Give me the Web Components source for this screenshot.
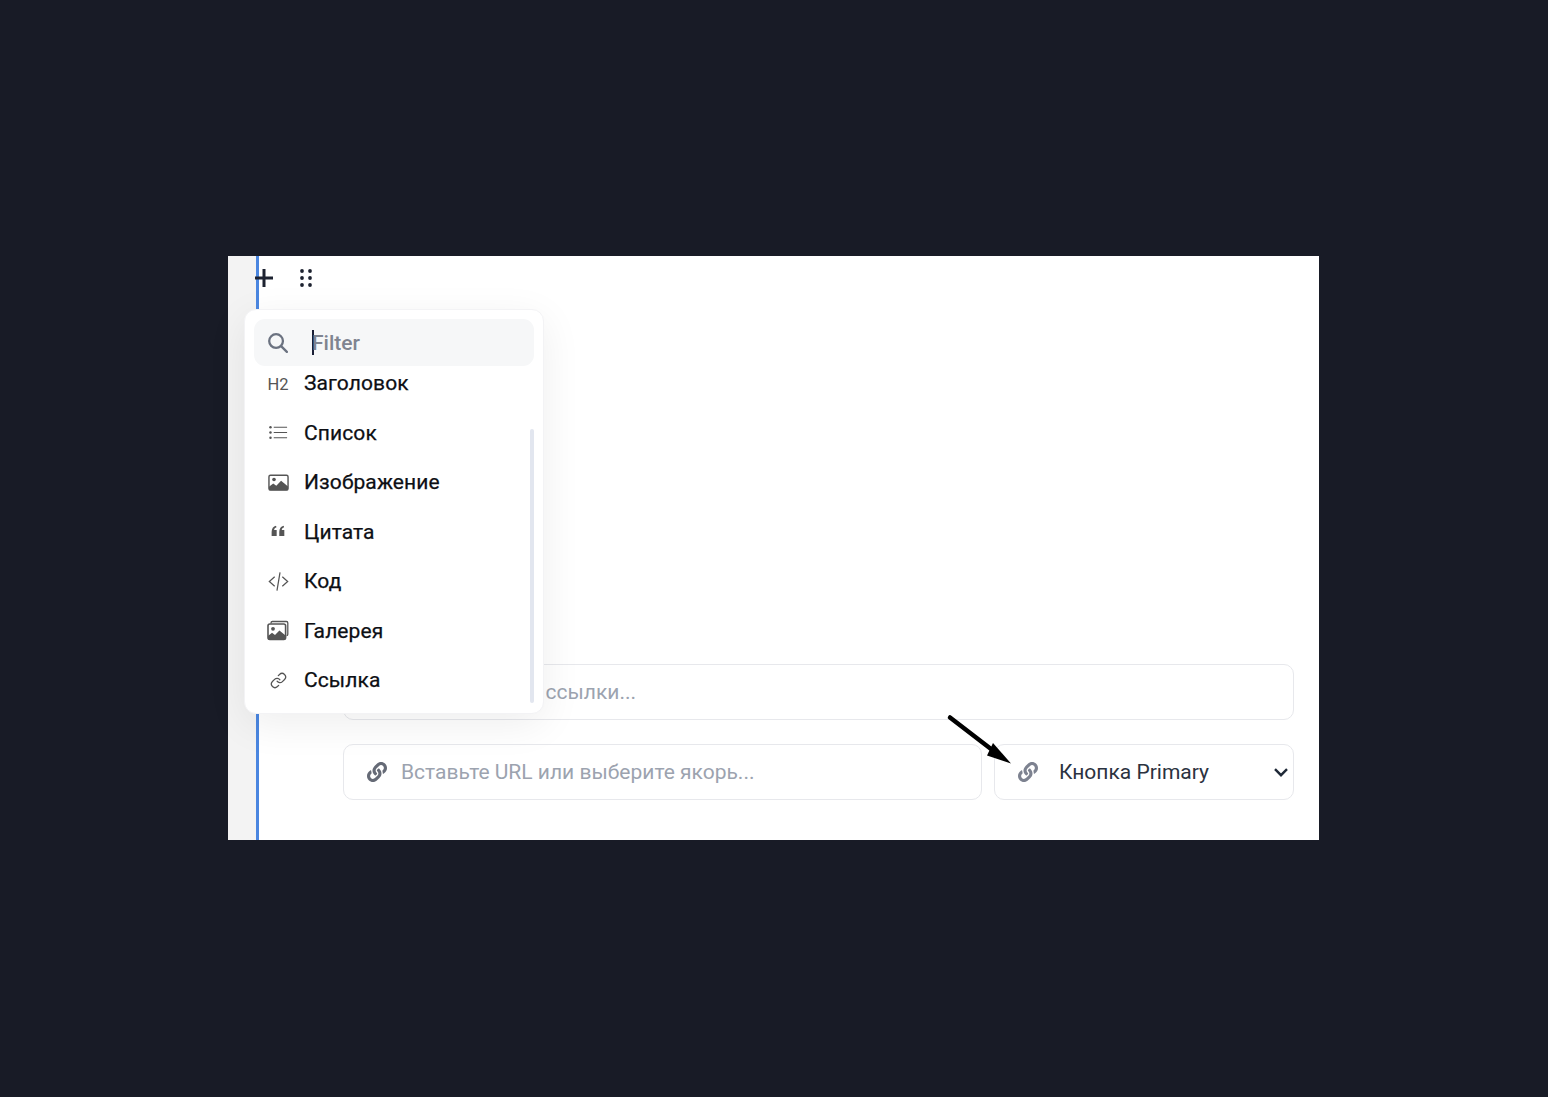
<!DOCTYPE html>
<html lang="ru">
<head>
<meta charset="utf-8">
<title>Editor</title>
<style>
  html, body { margin: 0; height: 100%; }
  body {
    background: #181b26;
    font-family: Roboto, "Liberation Sans", sans-serif;
    display: flex;
    align-items: center;
    justify-content: center;
    box-sizing: border-box;
    height: 1097px;
    padding: 0 1px 1px 0;
    overflow: hidden;
  }
</style>
</head>
<body>
<editor-frame>
  <block-toolbar slot="overlay"></block-toolbar>
  <slash-menu slot="overlay">
    <menu-item label="Заголовок" icon="h2"></menu-item>
    <menu-item label="Список" icon="list"></menu-item>
    <menu-item label="Изображение" icon="image"></menu-item>
    <menu-item label="Цитата" icon="quote"></menu-item>
    <menu-item label="Код" icon="code"></menu-item>
    <menu-item label="Галерея" icon="gallery"></menu-item>
    <menu-item label="Ссылка" icon="link"></menu-item>
  </slash-menu>
  <callout-arrow slot="overlay"></callout-arrow>

  <text-field placeholder="Введите текст ссылки..." inset="57"></text-field>
  <field-row>
    <text-field placeholder="Вставьте URL или выберите якорь..." icon></text-field>
    <style-select value="Кнопка Primary"></style-select>
  </field-row>
</editor-frame>

<script>
const LINK_PATH = 'M326.612 185.391c59.747 59.809 58.927 155.698.36 214.59-.11.12-.24.25-.36.37l-67.2 67.2c-59.27 59.27-155.699 59.262-214.96 0-59.27-59.26-59.27-155.7 0-214.96l37.106-37.106c9.84-9.84 26.786-3.3 27.294 10.606.648 17.722 3.826 35.527 9.69 52.721 1.986 5.822.567 12.262-3.783 16.612l-13.087 13.087c-28.026 28.026-28.905 73.66-1.155 101.96 28.024 28.579 74.086 28.749 102.325.51l67.2-67.19c28.191-28.191 28.073-73.757 0-101.83-3.701-3.694-7.429-6.564-10.341-8.569a16.037 16.037 0 0 1-6.947-12.606c-.396-10.567 3.348-21.456 11.698-29.806l21.054-21.055c5.521-5.521 14.182-6.199 20.584-1.731a152.482 152.482 0 0 1 20.522 17.197zM467.547 44.449c-59.261-59.262-155.69-59.27-214.96 0l-67.2 67.2c-.12.12-.25.25-.36.37-58.566 58.892-59.387 154.781.36 214.59a152.454 152.454 0 0 0 20.521 17.196c6.402 4.468 15.064 3.789 20.584-1.731l21.054-21.055c8.35-8.35 12.094-19.239 11.698-29.806a16.037 16.037 0 0 0-6.947-12.606c-2.912-2.005-6.64-4.875-10.341-8.569-28.073-28.073-28.191-73.639 0-101.83l67.2-67.19c28.239-28.239 74.3-28.069 102.325.51 27.75 28.3 26.872 73.934-1.155 101.96l-13.087 13.087c-4.35 4.35-5.769 10.79-3.783 16.612 5.864 17.194 9.042 34.999 9.69 52.721.509 13.906 17.454 20.446 27.294 10.606l37.106-37.106c59.271-59.259 59.271-155.699.001-214.959z';

const linkSolid = `<svg width="20" height="20" viewBox="0 0 512 512" fill="currentColor"><path d="${LINK_PATH}"/></svg>`;

const MENU_ICONS = {
  h2: '<span class="h2">H2</span>',
  list: `<svg width="21" height="21" viewBox="0 0 22 22" fill="none" stroke="#555" stroke-width="1.200">
      <path d="M6 5.500h14M6 11h14M6 16.500h14"/>
      <g fill="#555" stroke="none"><circle cx="2.600" cy="5.500" r="1.300"/><circle cx="2.600" cy="11" r="1.300"/><circle cx="2.600" cy="16.500" r="1.300"/></g>
    </svg>`,
  image: `<svg width="21" height="21" viewBox="0 0 22 22">
      <rect x="1" y="3.400" width="20" height="15.600" rx="1.600" fill="none" stroke="#555" stroke-width="1.500"/>
      <circle cx="6.300" cy="7.800" r="1.900" fill="#555"/>
      <path d="M1 19v-3.500l4.500-3.400 3.200 2.300 5-5.200 7.300 6V19z" fill="#555"/>
    </svg>`,
  quote: `<svg width="21" height="21" viewBox="0 0 22 22" fill="#555">
      <path d="M3.800 11.400c0-3.400 1.700-5.600 4.600-6.400l.5 1.500c-1.500.5-2.300 1.500-2.500 2.800h2.700v6.300H3.800zM11.800 11.400c0-3.400 1.700-5.600 4.600-6.400l.5 1.500c-1.500.5-2.300 1.500-2.500 2.800h2.700v6.300h-5.300z"/>
    </svg>`,
  code: `<svg width="21" height="21" viewBox="0 0 22 22" fill="none" stroke="#555" stroke-width="1.300">
      <path d="M7 6l-5.600 5L7 16M15 6l5.600 5L15 16M12.600 1.400L9.400 20.600"/>
    </svg>`,
  gallery: `<svg width="22" height="22" viewBox="0 0 22 22">
      <path d="M4 3.600V2.900c0-.8.6-1.400 1.400-1.400h14c.8 0 1.400.6 1.400 1.400v11.400c0 .8-.5 1.400-1.200 1.400" fill="none" stroke="#555" stroke-width="1.300"/>
      <rect x="1" y="4" width="17.600" height="15.400" rx="1.800" fill="none" stroke="#555" stroke-width="1.600"/>
      <circle cx="6" cy="8.800" r="1.900" fill="#555"/>
      <path d="M1 19.400v-3.400l4-3.200 3 2.100 4.400-4.500 6.200 5v4z" fill="#555"/>
    </svg>`,
  link: `<svg width="17" height="17" viewBox="0 0 24 24" fill="none" stroke="#555" stroke-width="1.800" stroke-linecap="round">
      <path d="M10 13a5 5 0 0 0 7.540.54l3-3a5 5 0 0 0-7.070-7.070l-1.720 1.710"/>
      <path d="M14 11a5 5 0 0 0-7.540-.54l-3 3a5 5 0 0 0 7.070 7.070l1.710-1.710"/>
    </svg>`
};

class EditorFrame extends HTMLElement {
  constructor() {
    super();
    this.attachShadow({ mode: 'open' });
    this.shadowRoot.innerHTML = `
      <style>
        :host {
          display: flex;
          position: relative;
          flex: none;
          width: 1091px;
          height: 584px;
          background: #fff;
        }
        .gutter { width: 28px; background: #f3f3f3; flex: none; }
        .main {
          flex: 1;
          border-left: 3px solid #4a86e0;
          padding: 0 25px 40px 84px;
          display: flex;
          flex-direction: column;
          justify-content: flex-end;
          gap: 24px;
          background: #fff;
        }
      </style>
      <div class="gutter"></div>
      <div class="main"><slot></slot></div>
      <slot name="overlay"></slot>
    `;
  }
}

class BlockToolbar extends HTMLElement {
  constructor() {
    super();
    this.attachShadow({ mode: 'open' });
    this.shadowRoot.innerHTML = `
      <style>
        :host { position: absolute; left: 27px; top: 13px; display: flex; gap: 27px; height: 18px; color: #1d2230; }
        svg { display: block; }
      </style>
      <svg width="18" height="18" viewBox="0 0 18 18" fill="none" stroke="currentColor" stroke-width="3"><path d="M9 0v18M0 9h18"/></svg>
      <svg width="12" height="18" viewBox="0 0 12 18" fill="currentColor">
        <circle cx="2" cy="2" r="1.900"/><circle cx="10" cy="2" r="1.900"/>
        <circle cx="2" cy="9" r="1.900"/><circle cx="10" cy="9" r="1.900"/>
        <circle cx="2" cy="16" r="1.900"/><circle cx="10" cy="16" r="1.900"/>
      </svg>
    `;
  }
}

class SlashMenu extends HTMLElement {
  constructor() {
    super();
    this.attachShadow({ mode: 'open' });
    this.shadowRoot.innerHTML = `
      <style>
        :host {
          position: absolute;
          left: 16px;
          top: 53px;
          width: 300px;
          height: 405px;
          box-sizing: border-box;
          background: #fff;
          border: 1px solid #f3f3f5;
          border-radius: 12px;
          box-shadow: 0 10px 40px rgba(0, 0, 0, .07);
          display: flex;
          flex-direction: column;
          padding: 9px 9px 0;
          overflow: hidden;
        }
        .search {
          flex: none;
          height: 47px;
          background: #f6f7f8;
          border-radius: 11px;
          display: flex;
          align-items: center;
          padding-left: 13px;
          position: relative;
          z-index: 1;
        }
        .search svg { display: block; flex: none; }
        .caret { width: 2px; height: 25px; background: #1a1f36; margin-left: 24px; flex: none; }
        .filter { font-size: 21px; color: #7f8490; font-weight: 500; margin-left: -2px; }
        .list { flex: 1; overflow: hidden; margin: 0 -9px; position: relative; }
        .items { margin-top: -7.500px; display: flex; flex-direction: column; }
        .bar {
          position: absolute;
          right: 9px;
          top: 63px;
          width: 4px;
          height: 274px;
          border-radius: 2px;
          background: #e2e6ef;
        }
      </style>
      <div class="search">
        <svg width="21" height="21" viewBox="0 0 22 22" fill="none" stroke="#6b7280" stroke-width="2.400">
          <circle cx="9.500" cy="9.500" r="7.200"/><path d="M14.800 14.800l6 6" stroke-linecap="round"/>
        </svg>
        <span class="caret"></span>
        <span class="filter">Filter</span>
      </div>
      <div class="list">
        <div class="items"><slot></slot></div>
        <div class="bar"></div>
      </div>
    `;
  }
}

class MenuItem extends HTMLElement {
  constructor() {
    super();
    this.attachShadow({ mode: 'open' });
  }

  connectedCallback() {
    const icon = MENU_ICONS[this.getAttribute('icon')] || '';
    this.shadowRoot.innerHTML = `
      <style>
        :host {
          display: flex;
          align-items: center;
          height: 49.500px;
          padding-left: 21px;
          gap: 14px;
          font-size: 21px;
          letter-spacing: .1px;
          -webkit-text-stroke: .25px #0d0f14;
          color: #0d0f14;
        }
        .ico { width: 24px; height: 24px; display: flex; align-items: center; justify-content: center; flex: none; }
        .h2 { font-size: 16.500px; letter-spacing: 0; -webkit-text-stroke: 0; color: #555; padding-top: 2px; }
        svg { display: block; }
      </style>
      <span class="ico">${icon}</span>
      <span>${this.getAttribute('label')}</span>
    `;
  }
}

class FieldRow extends HTMLElement {
  constructor() {
    super();
    this.attachShadow({ mode: 'open' });
    this.shadowRoot.innerHTML = `
      <style>
        :host { display: flex; gap: 12px; }
        ::slotted(text-field) { flex: 1; }
      </style>
      <slot></slot>
    `;
  }
}

class TextField extends HTMLElement {
  constructor() {
    super();
    this.attachShadow({ mode: 'open' });
  }

  connectedCallback() {
    const withIcon = this.hasAttribute('icon');
    const inset = this.getAttribute('inset') || 23;
    this.shadowRoot.innerHTML = `
      <style>
        :host {
          display: flex;
          flex: none;
          align-items: center;
          box-sizing: border-box;
          height: 56px;
          border: 1px solid #e7e8ec;
          border-radius: 10px;
          padding-left: ${inset}px;
          gap: 14px;
          background: #fff;
          font-size: 21px;
          color: #9ca3af;
        }
        .ico { color: #656a76; display: flex; }
      </style>
      ${withIcon ? `<span class="ico">${linkSolid}</span>` : ''}
      <span>${this.getAttribute('placeholder')}</span>
    `;
  }
}

class StyleSelect extends HTMLElement {
  constructor() {
    super();
    this.attachShadow({ mode: 'open' });
  }

  connectedCallback() {
    this.shadowRoot.innerHTML = `
      <style>
        :host {
          display: flex;
          align-items: center;
          flex: none;
          box-sizing: border-box;
          width: 300px;
          height: 56px;
          border: 1px solid #e7e8ec;
          border-radius: 10px;
          padding: 0 5px 0 23px;
          background: #fff;
          font-size: 21px;
          color: #2b3240;
        }
        .ico { color: #7d8290; display: flex; margin-right: 21px; }
        .value { flex: 1; }
        svg { display: block; }
      </style>
      <span class="ico">${linkSolid}</span>
      <span class="value">${this.getAttribute('value')}</span>
      <svg width="14" height="9" viewBox="0 0 14 9" fill="none" stroke="#1f2937" stroke-width="2.400"><path d="M1 1.200l6 6 6-6"/></svg>
    `;
  }
}

class CalloutArrow extends HTMLElement {
  constructor() {
    super();
    this.attachShadow({ mode: 'open' });
    this.shadowRoot.innerHTML = `
      <style>:host { position: absolute; left: 718px; top: 456px; display: block; width: 70px; height: 60px; }
      svg { display: block; }</style>
      <svg width="70" height="60" viewBox="718 456 70 60">
        <path d="M722 461.500L763 493" stroke="#000" stroke-width="4.500" stroke-linecap="round" fill="none"/>
        <path d="M783 507.500L759 499.500L765 487z" fill="#000"/>
      </svg>
    `;
  }
}

customElements.define('editor-frame', EditorFrame);
customElements.define('block-toolbar', BlockToolbar);
customElements.define('slash-menu', SlashMenu);
customElements.define('menu-item', MenuItem);
customElements.define('field-row', FieldRow);
customElements.define('text-field', TextField);
customElements.define('style-select', StyleSelect);
customElements.define('callout-arrow', CalloutArrow);
</script>
</body>
</html>
